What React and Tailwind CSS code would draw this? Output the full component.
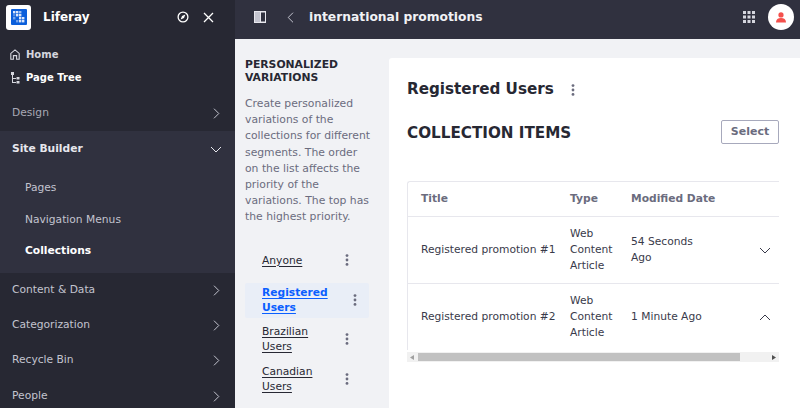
import React from "react";

const Chevron = ({ dir = "right", className = "" }) => {
  const d = {
    right: "M1 .7 L5.8 5.5 L1 10.3",
    left: "M6 .7 L1.2 5.5 L6 10.3",
    down: "M1 1 L6 6 L11 1",
    up: "M1 6 L6 1 L11 6",
  }[dir];
  const horizontal = dir === "down" || dir === "up";
  return (
    <svg width={horizontal ? 12 : 7} height={horizontal ? 7 : 11} viewBox={horizontal ? "0 0 12 7" : "0 0 7 11"} fill="none" stroke="currentColor" strokeWidth="1" className={className}>
      <path d={d} />
    </svg>
  );
};

const Kebab = ({ className = "" }) => (
  <svg width="4" height="12" viewBox="0 0 4 12" fill="currentColor" className={className}>
    <circle cx="2" cy="1.6" r="1.4" />
    <circle cx="2" cy="6" r="1.4" />
    <circle cx="2" cy="10.4" r="1.4" />
  </svg>
);

const NavRow = ({ label, className = "h-[35px]", textClass = "text-[#c3c4cf]" }) => (
  <div className={`${className} shrink-0 flex items-center justify-between pl-3 pr-[15px] text-[10.7px] ${textClass}`}>
    <span>{label}</span>
    <Chevron className="text-[#c3c4cf]" />
  </div>
);

const Logo = () => (
  <div className="w-[25px] h-[25px] rounded-[3px] bg-white flex items-center justify-center">
    <svg width="16" height="16" viewBox="0 0 16 16">
      <rect width="16" height="16" rx="1" fill="#0b5fdb" />
      <g fill="#dbe7fb">
        <rect x="2" y="2" width="2.4" height="2.4" />
        <rect x="5" y="2" width="2.4" height="2.4" />
        <rect x="8" y="2" width="2.4" height="2.4" opacity=".7" />
        <rect x="2" y="5" width="2.4" height="2.4" opacity=".35" />
        <rect x="5" y="5" width="2.4" height="2.4" />
        <rect x="8" y="5" width="2.4" height="2.4" />
        <rect x="2" y="8" width="2.4" height="2.4" opacity=".5" />
        <rect x="8" y="8" width="2.4" height="2.4" />
        <rect x="11" y="8" width="2.4" height="2.4" />
        <rect x="5" y="11" width="2.4" height="2.4" opacity=".5" />
        <rect x="8" y="11" width="2.4" height="2.4" />
        <rect x="11" y="11" width="2.4" height="2.4" />
      </g>
    </svg>
  </div>
);

const Sidebar = () => (
  <aside className="w-[235px] h-[408px] overflow-hidden shrink-0 bg-[#272833] flex flex-col">
    <div className="h-[39px] shrink-0 flex items-center pl-[6px] pr-[21px] pb-[5px]">
      <Logo />
      <span className="ml-3 text-[12px] font-bold text-white">Liferay</span>
      <svg width="12" height="12" viewBox="0 0 12 12" fill="none" className="ml-auto text-white">
        <circle cx="6" cy="6" r="4.9" stroke="currentColor" strokeWidth="1.3" />
        <path d="M8.4 3.6 L7 7 L3.6 8.4 L5 5 Z" fill="currentColor" />
      </svg>
      <svg width="11" height="11" viewBox="0 0 11 11" fill="none" stroke="white" strokeWidth="1.3" className="ml-[14px]">
        <path d="M1 1 L10 10 M10 1 L1 10" />
      </svg>
    </div>
    <div className="pt-[4px] h-[56px] shrink-0 flex flex-col">
      <div className="h-[23px] flex items-center pl-[10px] text-[10px] font-bold text-[#d5d6de]">
        <svg width="10" height="11" viewBox="0 0 10 11" fill="none" stroke="currentColor" strokeWidth="1.1">
          <path d="M.8 10.2 V4.4 L5 .9 L9.2 4.4 V10.2 H6.6 V6.6 H3.4 V10.2 Z" />
        </svg>
        <span className="ml-[6px]">Home</span>
      </div>
      <div className="h-[23px] flex items-center pl-[11px] text-[10px] font-bold text-white">
        <svg width="9" height="12" viewBox="0 0 9 12" fill="currentColor" className="text-[#d5d6de]">
          <rect x="0" y="0" width="3" height="3" />
          <rect x="1" y="3" width="1" height="8" />
          <rect x="1" y="6" width="4" height="1" />
          <rect x="1" y="10" width="4" height="1" />
          <rect x="5.5" y="5" width="3" height="2.5" />
          <rect x="5.5" y="9" width="3" height="2.5" />
        </svg>
        <span className="ml-[6px]">Page Tree</span>
      </div>
    </div>
    <NavRow label="Design" className="h-[36px]" textClass="text-[#a7a9b5]" />
    <div className="h-[142px] shrink-0 bg-[#30313f] flex flex-col text-[10.7px]">
      <div className="h-[36px] shrink-0 flex items-center justify-between pl-3 pr-[13px] font-bold text-[#e7e7ed]">
        <span>Site Builder</span>
        <Chevron dir="down" className="text-[#e7e7ed]" />
      </div>
      <div className="pt-[5px] pl-[25px] flex flex-col text-[#c3c4cf]">
        <div className="h-[32px] flex items-center">Pages</div>
        <div className="h-[32px] flex items-center">Navigation Menus</div>
        <div className="h-[30px] flex items-center font-bold text-white">Collections</div>
      </div>
    </div>
    <NavRow label="Content & Data" />
    <NavRow label="Categorization" />
    <NavRow label="Recycle Bin" />
    <NavRow label="People" className="h-[36px]" />
  </aside>
);

const TopBar = () => (
  <header className="h-[39px] shrink-0 bg-[#30313f] flex items-center pl-[19px] pr-[6px] pb-[5px]">
    <svg width="12" height="12" viewBox="0 0 12 12">
      <rect x="0" y="0" width="12" height="12" fill="#e7e7ed" />
      <rect x="1" y="1" width="5" height="10" fill="#c4c5d0" />
      <rect x="7" y="1.5" width="4" height="9" fill="#30313f" />
    </svg>
    <Chevron dir="left" className="ml-[21px] text-[#c3c4cf]" />
    <span className="ml-[15px] text-[12.3px] font-bold text-[#f1f2f5]">international promotions</span>
    <svg width="12" height="12" viewBox="0 0 12 12" fill="#d5d6de" className="ml-auto">
      {[0, 4.5, 9].map((y) =>
        [0, 4.5, 9].map((x) => <rect key={`${x}-${y}`} x={x} y={y} width="3" height="3" />)
      )}
    </svg>
    <div className="ml-[13px] w-[26px] h-[26px] rounded-full bg-white flex items-center justify-center">
      <svg width="10" height="11" viewBox="0 0 10 11" fill="#f4504c">
        <circle cx="5" cy="2.9" r="2.6" />
        <path d="M0 10.6 C0 7.4 2 6 5 6 C8 6 10 7.4 10 10.6 Z" />
      </svg>
    </div>
  </header>
);

const Variation = ({ lines, active, className = "" }) => (
  <div className={`h-[35px] w-[124px] shrink-0 flex items-center pl-[17px] rounded-[2px] ${active ? "bg-[#e9eef7]" : ""} ${className}`}>
    <a className={`w-[72px] text-[10.7px] leading-[15px] underline underline-offset-2 ${active ? "font-bold text-[#0b5fff]" : "text-[#272833]"}`}>
      {lines}
    </a>
    <Kebab className={`text-[#6b6c7e] ${active ? "ml-[19px]" : "ml-[11px]"}`} />
  </div>
);

const VariationsPanel = () => (
  <section className="w-[154px] shrink-0 pl-[10px] pr-[16px] pt-[19px] overflow-hidden">
    <h2 className="text-[10.8px] leading-[13px] font-bold text-[#272833]">
      PERSONALIZED VARIATIONS
    </h2>
    <p className="mt-[12px] w-[128px] text-[10.8px] leading-[16.2px] text-[#6b6c7e]">
      Create personalized variations of the collections for different segments. The order on the list affects the priority of the variations. The top has the highest priority.
    </p>
    <div className="mt-[17px] flex flex-col">
      <Variation lines="Anyone" />
      <Variation lines="Registered Users" active className="mt-[5px]" />
      <Variation lines="Brazilian Users" className="mt-[4px]" />
      <Variation lines="Canadian Users" className="mt-[5px]" />
    </div>
  </section>
);

const Row = ({ title, date, up }) => (
  <div className="h-[67px] border-t border-[#e7e7ed] flex items-center text-[10.7px] text-[#393a4a]">
    <div className="w-[162px] pl-[13px] whitespace-nowrap">{title}</div>
    <div className="w-[61px] leading-[16px]">Web<br />Content<br />Article</div>
    <div className="w-[80px] leading-[16px]">{date}</div>
    <Chevron dir={up ? "up" : "down"} className="ml-[48px] text-[#393a4a]" />
  </div>
);

const Card = () => (
  <main className="flex-1 min-w-0 mt-[19px] bg-white rounded-tl-[3px] pl-[18px] pr-[21px] pt-[22px] overflow-hidden">
    <div className="flex items-center h-[19px]">
      <h1 className="text-[15.2px] font-bold text-[#272833]">Registered Users</h1>
      <Kebab className="ml-[17px] text-[#6b6c7e]" />
    </div>
    <div className="mt-[21px] flex items-center justify-between h-[24px]">
      <h2 className="pt-[2px] text-[15.2px] font-bold text-[#272833]">COLLECTION ITEMS</h2>
      <button className="w-[58px] h-[24px] rounded-[2px] border border-[#a7a9bc] bg-white text-[11px] font-bold text-[#6b6c7e]">Select</button>
    </div>
    <div className="mt-[37px] w-[372px] border-l border-t border-[#e7e7ed] rounded-tl-[3px]">
      <div className="h-[34px] flex items-center text-[10.7px] font-bold text-[#6b6c7e]">
        <div className="w-[162px] pl-[13px]">Title</div>
        <div className="w-[61px]">Type</div>
        <div>Modified Date</div>
      </div>
      <Row title="Registered promotion #1" date="54 Seconds Ago" />
      <Row title="Registered promotion #2" date="1 Minute Ago" up />
    </div>
    <div className="w-[372px] h-[10px] mt-[2px] bg-[#f1f1f1] flex items-center justify-between pl-[3px] pr-[3px]">
      <svg width="4" height="5" viewBox="0 0 4 5" fill="#a0a0a0"><path d="M4 0 V5 L0 2.5 Z" /></svg>
      <div className="w-[322px] h-[8px] bg-[#c1c1c1] ml-[4px] mr-auto"></div>
      <svg width="4" height="5" viewBox="0 0 4 5" fill="#505050"><path d="M0 0 V5 L4 2.5 Z" /></svg>
    </div>
  </main>
);

export default function App() {
  return (
    <div className="w-[800px] h-[408px] overflow-hidden flex bg-[#f1f2f5] font-['DejaVu_Sans',sans-serif]">
      <Sidebar />
      <div className="flex-1 min-w-0 flex flex-col">
        <TopBar />
        <div className="flex-1 min-h-0 flex">
          <VariationsPanel />
          <Card />
        </div>
      </div>
    </div>
  );
}
